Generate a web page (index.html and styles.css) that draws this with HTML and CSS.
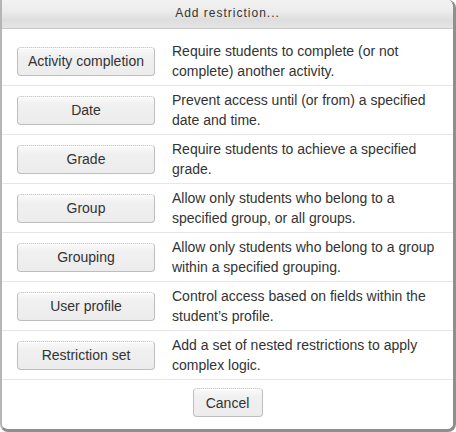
FILE: index.html
```html
<!DOCTYPE html>
<html>
<head>
<meta charset="utf-8">
<link rel="stylesheet" href="styles.css">
</head>
<body>
<div class="dialog">
  <div class="header">Add restriction...</div>
  <div class="body">
    <div class="row">
      <button class="btn opt">Activity completion</button>
      <div class="desc">Require students to complete (or not complete) another activity.</div>
    </div>
    <div class="row">
      <button class="btn opt">Date</button>
      <div class="desc">Prevent access until (or from) a specified date and time.</div>
    </div>
    <div class="row">
      <button class="btn opt">Grade</button>
      <div class="desc">Require students to achieve a specified grade.</div>
    </div>
    <div class="row">
      <button class="btn opt">Group</button>
      <div class="desc">Allow only students who belong to a specified group, or all groups.</div>
    </div>
    <div class="row">
      <button class="btn opt">Grouping</button>
      <div class="desc">Allow only students who belong to a group within a specified grouping.</div>
    </div>
    <div class="row">
      <button class="btn opt">User profile</button>
      <div class="desc">Control access based on fields within the student’s profile.</div>
    </div>
    <div class="row">
      <button class="btn opt">Restriction set</button>
      <div class="desc">Add a set of nested restrictions to apply complex logic.</div>
    </div>
    <div class="footer">
      <button class="btn cancel">Cancel</button>
    </div>
  </div>
</div>
</body>
</html>
```
FILE: styles.css
```css
html, body {
  margin: 0;
  padding: 0;
  background: #ffffff;
}
.dialog {
  box-sizing: border-box;
  width: 456px;
  height: 432px;
  background: #fff;
  border-left: 2px solid #b5b5b5;
  border-right: 3px solid #8f8f8f;
  border-bottom: 3px solid #8f8f8f;
  border-radius: 0 8px 8px 8px;
  font-family: "Liberation Sans", Arial, sans-serif;
  color: #333;
  display: flex;
  flex-direction: column;
  overflow: hidden;
}
.header {
  flex: 0 0 auto;
  height: 28px;
  border-bottom: 1px solid #c8c8c8;
  background: linear-gradient(#f2f2f2 0%, #ececec 40%, #dedede 70%, #e4e4e4 100%);
  text-align: center;
  font-size: 12px;
  letter-spacing: 1px;
  line-height: 27px;
  color: #333;
}
.body {
  padding-top: 8px;
  display: flex;
  flex-direction: column;
}
.row {
  display: flex;
  align-items: center;
  gap: 17px;
  height: 48px;
  padding: 0 0 0 15px;
  border-bottom: 1px solid #e6e6e6;
}
.btn {
  box-sizing: border-box;
  height: 29px;
  font-family: "Liberation Sans", Arial, sans-serif;
  font-size: 14px;
  color: #333;
  background: linear-gradient(#fafafa 0%, #f0f0f0 30%, #ececec 100%);
  border: 1px solid #bdbdbd;
  border-top: 1px dotted #c8c8c8;
  border-radius: 4px;
  box-shadow: inset 0 1px 0 #fff;
  padding: 0;
}
.opt {
  flex: 0 0 138px;
  width: 138px;
}
.desc {
  font-size: 14px;
  line-height: 20px;
  width: 268px;
  color: #333;
}
.footer {
  display: flex;
  justify-content: center;
  padding-top: 8px;
}
.cancel {
  width: 70px;
}
```
